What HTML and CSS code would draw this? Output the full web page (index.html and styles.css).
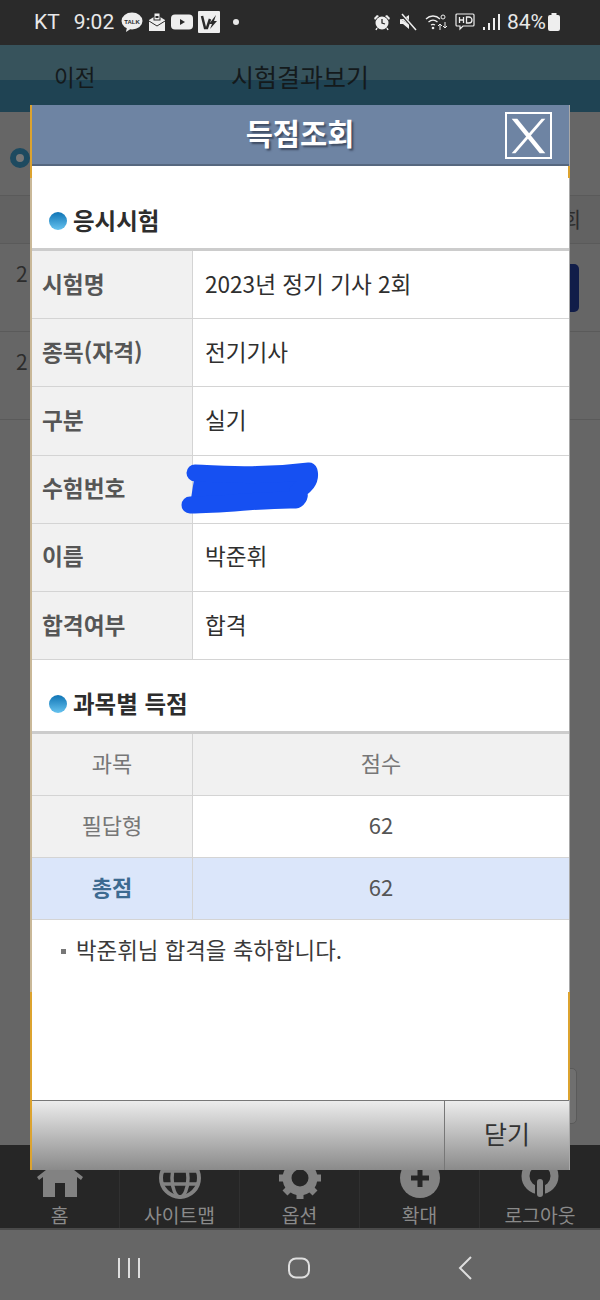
FILE: index.html
```html
<!DOCTYPE html>
<html lang="ko">
<head>
<meta charset="utf-8">
<title>득점조회</title>
<link rel="stylesheet" href="styles.css">
</head>
<body>
<div class="screen">
  <div class="status">
    <div class="status-left">
      <span class="carrier">KT</span>
      <span class="clock">9:02</span>
      <svg class="si" width="22" height="20" viewBox="0 0 22 20"><ellipse cx="11" cy="9" rx="10.500" ry="8.500" fill="#eee"/><path d="M6 15l-1 5 6-4z" fill="#eee"/><text x="11" y="11.500" class="talk">TALK</text></svg>
      <svg class="si" width="18" height="20" viewBox="0 0 18 20"><path d="M1 8l8-5 8 5v11H1z" fill="#eee"/><path d="M1 9l8 5 8-5" fill="none" stroke="#2a2a2a" stroke-width="1"/><rect x="6" y="1" width="6" height="7" fill="#eee" stroke="#2a2a2a"/><rect x="7.500" y="4" width="3" height="2" fill="#2a2a2a"/></svg>
      <svg class="si" width="22" height="16" viewBox="0 0 22 16"><rect width="22" height="15" y="0.500" rx="4" fill="#eee"/><path d="M9 5l5 3-5 3z" fill="#2a2a2a"/></svg>
      <svg class="si" width="22" height="22" viewBox="0 0 22 22"><rect width="22" height="22" rx="1" fill="#eee"/><path d="M4 5l3 12h2l3-9" fill="none" stroke="#2a2a2a" stroke-width="2.500"/><path d="M11 13l7-9-2 6h3l-7 8 2-5z" fill="#2a2a2a"/></svg>
      <span class="dot"></span>
    </div>
    <div class="status-right">
      <svg class="si" width="18" height="18" viewBox="0 0 18 18"><circle cx="9" cy="10" r="6.500" fill="#eee"/><path d="M9 6v4l3 1" fill="none" stroke="#2a2a2a" stroke-width="1.300"/><path d="M1 5l3-3 2 1-4 4zM17 5l-3-3-2 1 4 4z" fill="#eee"/><path d="M4 15l-1 2M14 15l1 2" stroke="#eee" stroke-width="1.500"/></svg>
      <svg class="si" width="18" height="18" viewBox="0 0 18 18"><path d="M1 6h3l6-4v9z" fill="#eee"/><path d="M1 6v5h3l6 5v-5z" fill="#eee"/><path d="M2 1l15 16" stroke="#2a2a2a" stroke-width="3"/><path d="M3 1l14 16" stroke="#eee" stroke-width="1.500"/></svg>
      <svg class="si" width="22" height="18" viewBox="0 0 22 18"><g fill="none" stroke="#eee" stroke-width="1.300"><path d="M1 6c4-4 10-4 14 0"/><path d="M3.500 9c3-2.500 6-2.500 9 0"/><path d="M6 12c1.500-1 2.500-1 4 0"/></g><circle cx="8" cy="15" r="1.300" fill="#eee"/><circle cx="18" cy="4" r="2" fill="none" stroke="#eee"/><path d="M15 17v-6M15 11l-2 2M15 11l2 2M20 9v6M20 15l-2-2M20 15l2-2" stroke="#eee" fill="none"/></svg>
      <svg class="si" width="20" height="18" viewBox="0 0 20 18"><path d="M2 1h16a1 1 0 0 1 1 1v10a1 1 0 0 1-1 1H8l-3 3v-3H2a1 1 0 0 1-1-1V2a1 1 0 0 1 1-1z" fill="none" stroke="#eee" stroke-width="1.200"/><path d="M4.500 4v6M4.500 7h4M8.500 4v6M11.500 4v6h2.500a3 3 0 0 0 0-6z" fill="none" stroke="#eee" stroke-width="1.300"/></svg>
      <svg class="si" width="17" height="18" viewBox="0 0 17 18"><rect x="0" y="14" width="2" height="3" fill="#eee"/><rect x="5" y="10" width="2" height="7" fill="#eee"/><rect x="10" y="5" width="2" height="12" fill="#eee"/><rect x="15" y="1" width="2" height="16" fill="#eee"/></svg>
      <span class="battery-text">84%</span>
      <svg class="si" width="12" height="18" viewBox="0 0 12 18"><path d="M3.500 0h5v2h1.500a2 2 0 0 1 2 2v12a2 2 0 0 1-2 2H2a2 2 0 0 1-2-2V4a2 2 0 0 1 2-2h1.500z" fill="#eee"/></svg>
    </div>
  </div>

  <header class="app-head">
    <span class="back">이전</span>
    <span class="app-title">시험결과보기</span>
  </header>

  <main class="behind">
    <div class="behind-title"><span class="ring"></span></div>
    <div class="behind-row behind-th"><span class="edge-text">회</span></div>
    <div class="behind-row behind-td"><span class="num">2</span><span class="edge-btn"></span></div>
    <div class="behind-row behind-td"><span class="num">2</span></div>
    <div class="behind-fill"><span class="edge-pill"></span></div>
  </main>

  <nav class="tabs">
    <div class="tab">
      <svg class="tab-ic" width="46" height="38" viewBox="0 0 46 38"><path d="M23 0L46 18l-2 3-4-3v20H28V24H18v14H6V18l-4 3-2-3z" fill="#828282"/></svg>
      <span>홈</span>
    </div>
    <div class="tab">
      <svg class="tab-ic" width="42" height="42" viewBox="0 0 42 42"><circle cx="21" cy="21" r="19" fill="none" stroke="#828282" stroke-width="4"/><ellipse cx="21" cy="21" rx="8" ry="19" fill="none" stroke="#828282" stroke-width="3.500"/><path d="M2 14h38M2 27h38" stroke="#828282" stroke-width="3.500"/></svg>
      <span>사이트맵</span>
    </div>
    <div class="tab">
      <svg class="tab-ic" width="42" height="42" viewBox="0 0 42 42"><circle cx="21" cy="21" r="13" fill="none" stroke="#828282" stroke-width="9"/><g stroke="#828282" stroke-width="7"><path d="M21 0v6M21 36v6M0 21h6M36 21h6M6 6l4 4M32 32l4 4M36 6l-4 4M10 32l-4 4"/></g></svg>
      <span>옵션</span>
    </div>
    <div class="tab">
      <svg class="tab-ic" width="40" height="40" viewBox="0 0 40 40"><circle cx="20" cy="20" r="20" fill="#828282"/><path d="M20 11v18M11 20h18" stroke="#262626" stroke-width="5"/></svg>
      <span>확대</span>
    </div>
    <div class="tab">
      <svg class="tab-ic" width="38" height="42" viewBox="0 0 38 42"><circle cx="19" cy="19" r="14.500" fill="none" stroke="#828282" stroke-width="8"/><rect x="14" y="20" width="10" height="22" fill="#262626"/><rect x="16" y="22" width="6" height="18" rx="3" fill="#828282"/></svg>
      <span>로그아웃</span>
    </div>
  </nav>

  <div class="sysnav">
    <svg width="24" height="24" viewBox="0 0 24 24"><path d="M2 2v20M12 2v20M22 2v20" stroke="#dedede" stroke-width="2"/></svg>
    <svg width="24" height="24" viewBox="0 0 24 24"><rect x="2" y="2.500" width="20" height="19" rx="7" fill="none" stroke="#dedede" stroke-width="2"/></svg>
    <svg width="24" height="24" viewBox="0 0 24 24"><path d="M17 1L6 12l11 11" fill="none" stroke="#dedede" stroke-width="2"/></svg>
  </div>

  <section class="modal">
    <span class="gold gold-tl"></span>
    <span class="gold gold-tr"></span>
    <span class="gold gold-bl"></span>
    <span class="gold gold-br"></span>
    <div class="modal-head">
      <h1>득점조회</h1>
      <span class="close">
        <svg width="46" height="46" viewBox="0 0 46 46"><path d="M5 5h6L41 42h-6z" fill="#fff"/><path d="M41 5h-4L5 42h4z" fill="#fff"/></svg>
      </span>
    </div>
    <div class="modal-body">
      <h2 class="sec sec-first"><span class="bullet"></span>응시시험</h2>
      <div class="info">
        <div class="info-row"><div class="info-k">시험명</div><div class="info-v">2023년 정기 기사 2회</div></div>
        <div class="info-row"><div class="info-k">종목(자격)</div><div class="info-v">전기기사</div></div>
        <div class="info-row"><div class="info-k">구분</div><div class="info-v">실기</div></div>
        <div class="info-row"><div class="info-k">수험번호</div><div class="info-v"></div></div>
        <div class="info-row"><div class="info-k">이름</div><div class="info-v">박준휘</div></div>
        <div class="info-row"><div class="info-k">합격여부</div><div class="info-v">합격</div></div>
        <svg class="scribble" width="150" height="60" viewBox="0 0 150 60"><path d="M17 15C50 16 85 19 131 13C134 24 124 30 120 33C122 36 122 39 118 42C85 41 50 47 12 47" fill="#1650f2" stroke="#1650f2" stroke-width="17" stroke-linecap="round" stroke-linejoin="round"/></svg>
      </div>
      <h2 class="sec sec-second"><span class="bullet"></span>과목별 득점</h2>
      <div class="score">
        <div class="score-row score-hd"><div class="score-k">과목</div><div class="score-v">점수</div></div>
        <div class="score-row"><div class="score-k">필답형</div><div class="score-v">62</div></div>
        <div class="score-row score-total"><div class="score-k">총점</div><div class="score-v">62</div></div>
      </div>
      <p class="note"><span class="note-mark"></span>박준휘님 합격을 축하합니다.</p>
    </div>
    <div class="modal-foot">
      <div class="foot-space"></div>
      <div class="foot-btn">닫기</div>
    </div>
  </section>
</div>
</body>
</html>
```
FILE: styles.css
```css
* { box-sizing: border-box; }
html, body { margin: 0; padding: 0; }
body { width: 600px; height: 1300px; overflow: hidden; background: #666; font-family: "Noto Sans CJK KR", "Noto Sans", sans-serif; }
.screen { position: relative; width: 600px; height: 1300px; display: flex; flex-direction: column; }

.status { height: 45px; background: #2a2a2a; color: #e8e8e8; display: flex; justify-content: space-between; align-items: center; padding: 0 40px 1px 34px; }
.status-left, .status-right { display: flex; align-items: center; }
.si { display: block; flex: none; }
.carrier { font: 21px "Roboto", sans-serif; margin-right: 14px; }
.clock { font: 21px "Roboto", sans-serif; margin-right: 7px; }
.status-left .si { margin-right: 5px; }
.talk { font: 700 6px "Liberation Sans", sans-serif; text-anchor: middle; fill: #2a2a2a; }
.dot { width: 6px; height: 6px; border-radius: 50%; background: #e8e8e8; margin-left: 8px; }
.status-right .si { margin-left: 8px; }
.battery-text { font: 21px "Roboto", sans-serif; margin-left: 7px; margin-right: -6px; }

.app-head { height: 67px; background: linear-gradient(#37535c 0, #37535c 35px, #1f4353 35px, #1f4353 100%); display: flex; align-items: center; color: #141a1c; padding-bottom: 4px; }
.back { font-size: 22.500px; line-height: 1; margin-left: 54px; width: 177px; }
.app-title { font-size: 25px; line-height: 1; }

.behind { flex: 1; display: flex; flex-direction: column; background: #666; color: #2c2c2c; }
.behind-title { height: 84px; padding: 36px 0 0 10px; border-bottom: 1px solid #5a5a5a; }
.ring { display: block; width: 20px; height: 20px; border-radius: 50%; border: 6px solid #1d4a60; background: #777; }
.behind-row { display: flex; justify-content: space-between; align-items: center; border-bottom: 1px solid #5a5a5a; font-size: 21px; }
.behind-th { height: 48px; background: #626262; justify-content: flex-end; }
.edge-text { margin-right: 19px; line-height: 1; margin-top: -2px; }
.behind-td { height: 88px; padding-left: 16px; }
.num { line-height: 1; margin-top: -28px; }
.edge-btn { width: 30px; height: 48px; margin-right: 21px; border-radius: 5px; background: #111d49; }
.behind-fill { flex: 1; display: flex; justify-content: flex-end; align-items: flex-end; }
.edge-pill { width: 30px; height: 56px; margin: 0 23px 21px 0; border-radius: 5px; background: #6f6f6f; border: 1px solid #5a5a5a; }

.tabs { height: 85px; background: #262626; border-bottom: 2px solid #4a4a4a; display: grid; grid-template-columns: repeat(5, 120px); }
.tab { display: flex; flex-direction: column; align-items: center; height: 83px; padding-top: 12px; color: #8a8a8a; font-size: 19.300px; line-height: 24px; border-right: 1px solid #303030; }
.tab:last-child { border-right: 0; }
.tab-ic { flex: none; height: 42px; margin-bottom: 4px; }

.sysnav { height: 70px; background: #666; display: flex; justify-content: space-between; align-items: center; padding: 6px 122px 0 117px; }
.sysnav svg:nth-child(2) { margin-left: 2px; }

.modal { position: absolute; left: 30px; top: 105px; width: 540px; height: 1065px; display: flex; flex-direction: column; background: #fff; border-left: 2px solid #c9b898; border-right: 1px solid #a8a8a8; }
.gold { position: absolute; width: 2px; background: #dca32f; }
.gold-tl { left: -2px; top: 0; height: 73px; }
.gold-bl { left: -2px; top: 887px; height: 178px; }
.gold-tr { right: -1px; top: 61px; height: 12px; }
.gold-br { right: -1px; top: 887px; height: 108px; }
.modal-head { height: 61px; flex: none; display: flex; justify-content: center; align-items: center; background: #6e84a3; border-bottom: 2px solid #56677f; position: relative; padding-bottom: 3px; }
.modal-head h1 { margin: 0; color: #fff; font-size: 29.500px; font-weight: 700; line-height: 1; text-shadow: 2px 2px 2px #3d4a60; margin-left: -1px; }
.close { position: absolute; right: 17px; top: 7px; width: 47px; height: 47px; border: 2px solid #fff; display: flex; align-items: center; justify-content: center; }
.close svg { width: 43px; height: 43px; }

.modal-body { flex: 1; display: flex; flex-direction: column; }
.sec { margin: 0; display: flex; align-items: center; font-size: 23.500px; font-weight: 700; color: #2d2d2d; line-height: 1; padding-left: 17px; }
.sec-first { height: 82px; padding-top: 28px; }
.sec-second { height: 71px; padding-top: 17px; }
.bullet { width: 18px; height: 18px; border-radius: 50%; background: linear-gradient(#0f74b5, #67c3ef); margin-right: 6px; flex: none; }

.info { position: relative; border-top: 3px solid #ccc; }
.info-row { display: grid; grid-template-columns: 161px 1fr; height: 68.200px; border-bottom: 1px solid #d4d4d4; }
.info-k { background: #f1f1f1; border-right: 1px solid #d4d4d4; display: flex; align-items: center; padding: 0 0 3px 10px; font-size: 22.700px; font-weight: 700; color: #565656; }
.info-v { display: flex; align-items: center; padding: 0 0 3px 12px; font-size: 22.600px; color: #2f2f2f; }
.scribble { position: absolute; left: 146px; top: 207px; }

.score { border-top: 3px solid #ccc; }
.score-row { display: grid; grid-template-columns: 161px 1fr; height: 62px; border-bottom: 1px solid #d4d4d4; text-align: center; line-height: 57px; font-size: 22px; }
.score-k { background: #f1f1f1; border-right: 1px solid #d4d4d4; color: #777; }
.score-v { color: #555; }
.score-hd .score-v { background: #f1f1f1; color: #777; }
.score-total .score-k, .score-total .score-v { background: #dbe6fa; }
.score-total .score-k { color: #3d6a90; font-weight: 700; }

.note { margin: 0; padding: 14px 0 0 29px; display: flex; align-items: center; font-size: 22.400px; line-height: 30px; color: #3a3a3a; }
.note-mark { width: 5px; height: 5px; background: #777; margin: 5px 10px 0 0; }

.modal-foot { height: 70px; flex: none; display: flex; border-top: 1px solid #777; background: linear-gradient(#ececec, #8a8a8a); }
.foot-space { width: 413px; border-right: 1px solid #777; }
.foot-btn { flex: 1; display: flex; align-items: center; justify-content: center; font-size: 25px; color: #333; padding-bottom: 5px; }
```
